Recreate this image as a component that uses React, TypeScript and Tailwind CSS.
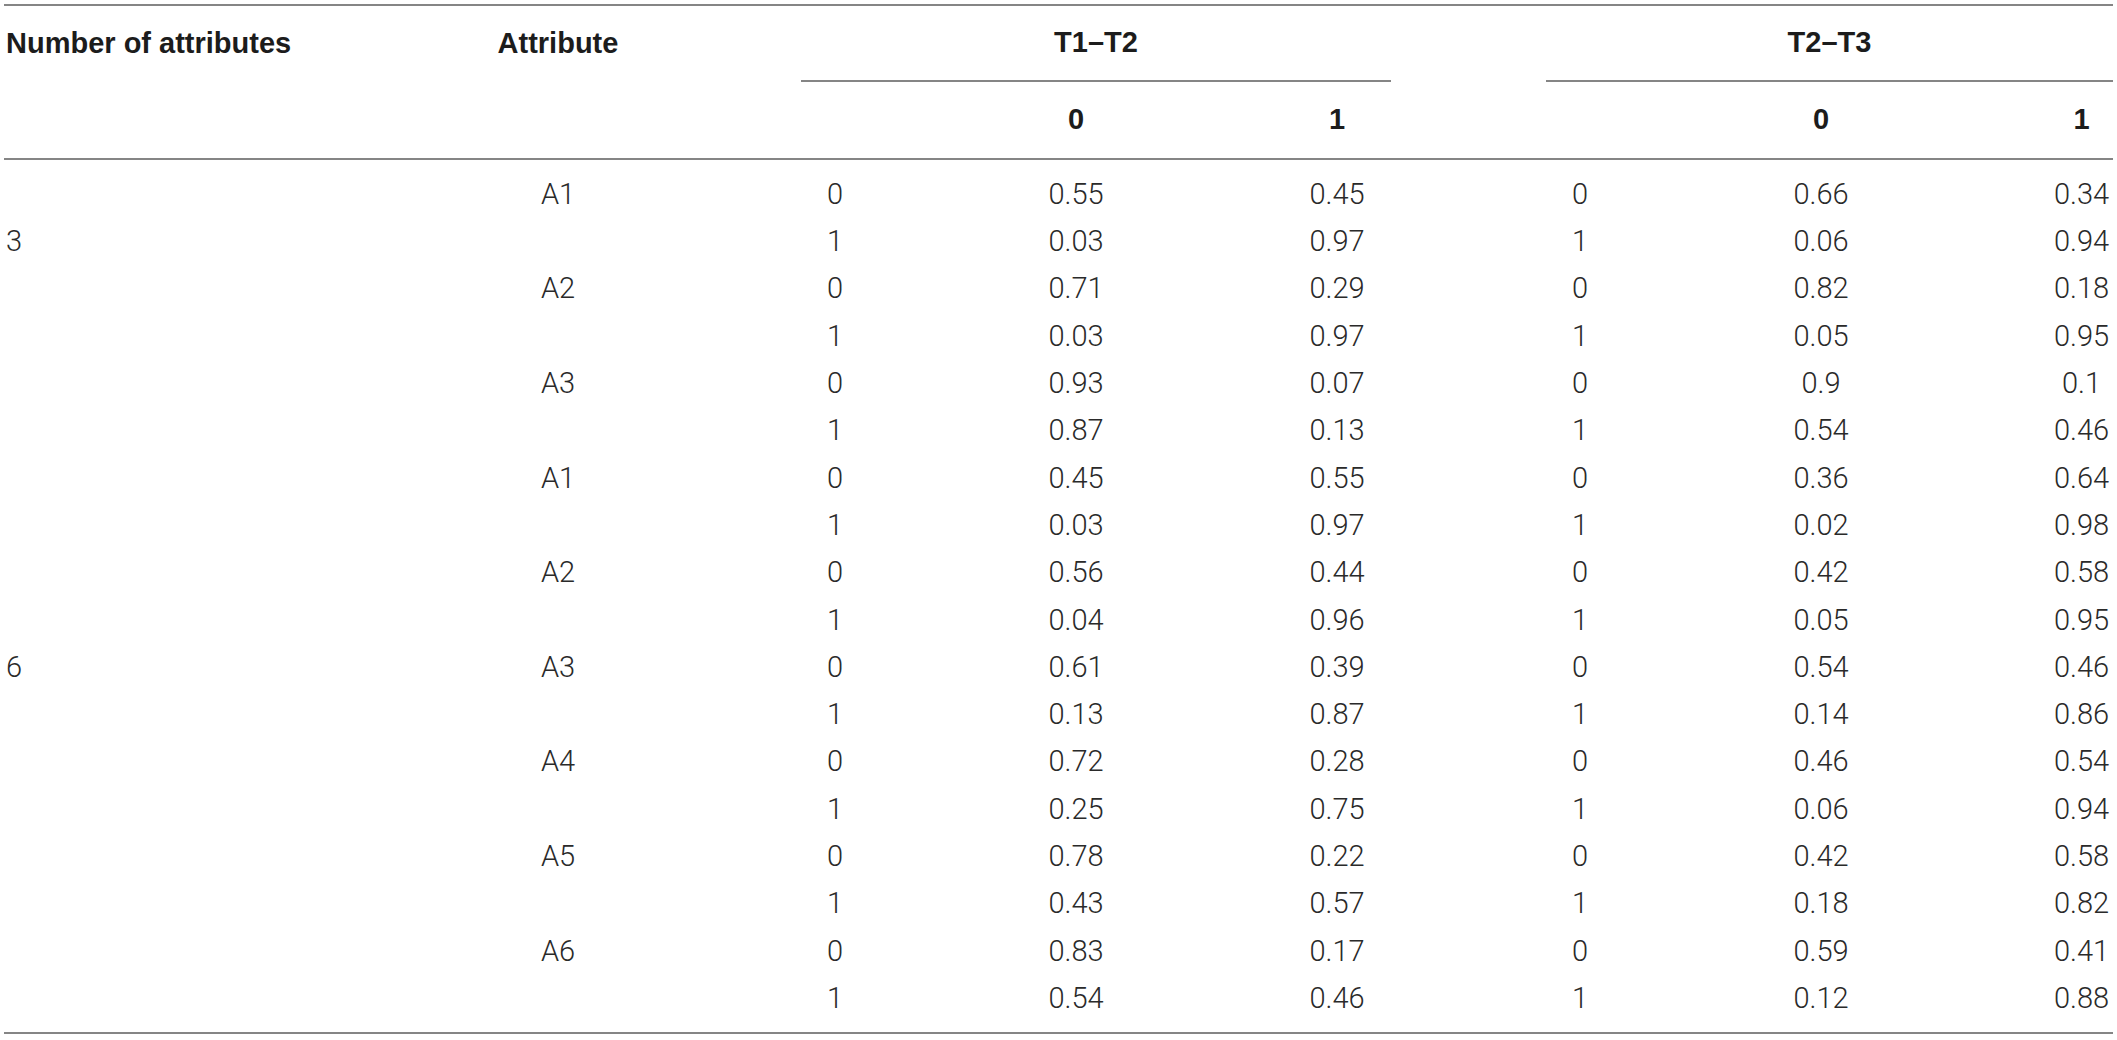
import React from "react";

const rows: string[][] = [
  ["", "A1", "0", "0.55", "0.45", "0", "0.66", "0.34"],
  ["3", "", "1", "0.03", "0.97", "1", "0.06", "0.94"],
  ["", "A2", "0", "0.71", "0.29", "0", "0.82", "0.18"],
  ["", "", "1", "0.03", "0.97", "1", "0.05", "0.95"],
  ["", "A3", "0", "0.93", "0.07", "0", "0.9", "0.1"],
  ["", "", "1", "0.87", "0.13", "1", "0.54", "0.46"],
  ["", "A1", "0", "0.45", "0.55", "0", "0.36", "0.64"],
  ["", "", "1", "0.03", "0.97", "1", "0.02", "0.98"],
  ["", "A2", "0", "0.56", "0.44", "0", "0.42", "0.58"],
  ["", "", "1", "0.04", "0.96", "1", "0.05", "0.95"],
  ["6", "A3", "0", "0.61", "0.39", "0", "0.54", "0.46"],
  ["", "", "1", "0.13", "0.87", "1", "0.14", "0.86"],
  ["", "A4", "0", "0.72", "0.28", "0", "0.46", "0.54"],
  ["", "", "1", "0.25", "0.75", "1", "0.06", "0.94"],
  ["", "A5", "0", "0.78", "0.22", "0", "0.42", "0.58"],
  ["", "", "1", "0.43", "0.57", "1", "0.18", "0.82"],
  ["", "A6", "0", "0.83", "0.17", "0", "0.59", "0.41"],
  ["", "", "1", "0.54", "0.46", "1", "0.12", "0.88"],
];

const cellCls = [
  "pl-[2px] text-left",
  "pr-[125px] text-center",
  "text-center",
  "text-center",
  "text-center",
  "pl-[155px] text-center",
  "text-center",
  "pl-[22px] text-center",
];

const gridCols =
  "grid grid-cols-[436px_361px_68px_414px_108px_223px_414px_85px]";

const headFont = { fontFamily: '"Liberation Sans", Arial, Helvetica, sans-serif' };
const bodyFont = { fontFamily: 'Roboto, "Liberation Sans", Arial, sans-serif' };

export default function App() {
  return (
    <div className="w-[2117px] h-[1040px] bg-white text-[29px] overflow-hidden">
      <div className="ml-[4px] pt-[4px] w-[2109px]">
        <div className="border-t-2 border-[#858585]" style={headFont}>
          <div className={`${gridCols} h-[76px] items-stretch font-bold text-[#1c1c1c]`}>
            <div className="pl-[2px] flex items-center whitespace-nowrap">
              Number of attributes
            </div>
            <div className="pr-[125px] flex items-center justify-center whitespace-nowrap">
              Attribute
            </div>
            <div className="col-span-3 flex items-center justify-center border-b-2 border-[#858585]">
              T1–T2
            </div>
            <div className="col-span-3 ml-[155px] flex items-center justify-center border-b-2 border-[#858585]">
              T2–T3
            </div>
          </div>
          <div className={`${gridCols} h-[76px] items-center font-bold text-[#1c1c1c]`}>
            <div />
            <div />
            <div />
            <div className="text-center">0</div>
            <div className="text-center">1</div>
            <div />
            <div className="text-center">0</div>
            <div className="pl-[22px] text-center">1</div>
          </div>
        </div>
        <div
          className="border-t-2 border-b-2 border-[#858585] pt-[11px] pb-[10px] font-light text-[#2a2a2a]"
          style={bodyFont}
        >
          {rows.map((r, i) => (
            <div key={i} className={`${gridCols} h-[47.3px] items-center`}>
              {r.map((v, j) => (
                <div key={j} className={`${cellCls[j]} whitespace-nowrap`}>
                  {v}
                </div>
              ))}
            </div>
          ))}
        </div>
      </div>
    </div>
  );
}
